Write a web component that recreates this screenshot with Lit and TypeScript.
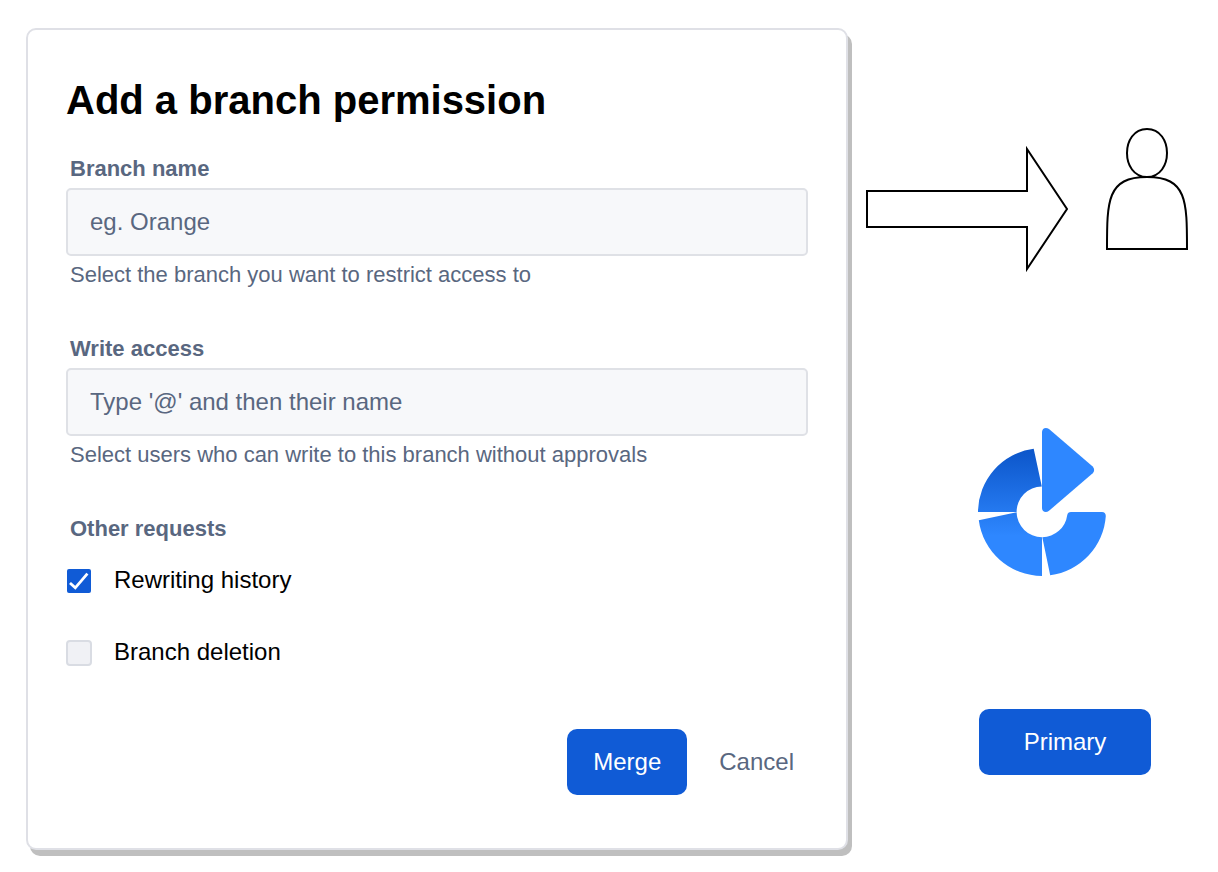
import { LitElement, html, css } from "lit";
import { customElement } from "lit/decorators.js";

@customElement("permission-form")
class PermissionForm extends LitElement {
  static styles = css`
    :host {
      display: block;
      box-sizing: border-box;
      padding: 46px 38px 53px;
      border: 2px solid #dfe0e6;
      border-radius: 10px;
      background: #fff;
      box-shadow: 4px 6px 0 #bfbfbf;
    }
    form {
      display: flex;
      flex-direction: column;
    }
    h1 {
      margin: 0 0 31px;
      font-size: 40px;
      line-height: 48px;
      font-weight: 700;
      color: #000;
    }
    .field {
      display: flex;
      flex-direction: column;
      margin-bottom: 46px;
    }
    .label {
      padding: 0 4px;
      font-size: 22px;
      line-height: 28px;
      font-weight: 700;
      color: #596780;
    }
    .text {
      box-sizing: border-box;
      width: 100%;
      height: 68px;
      margin: 5px 0;
      padding: 0 22px;
      border: 2px solid #dfe1e6;
      border-radius: 5px;
      background: #f7f8fa;
      color: #596780;
      font: inherit;
      font-size: 24px;
    }
    .text::placeholder {
      color: #596780;
      opacity: 1;
    }
    .hint {
      margin: 0;
      padding: 0 4px;
      font-size: 22px;
      line-height: 28px;
      color: #596780;
    }
    fieldset {
      display: flex;
      flex-direction: column;
      min-width: 0;
      margin: 0;
      padding: 0;
      border: 0;
    }
    legend {
      margin-bottom: 23px;
    }
    .option {
      display: flex;
      align-items: center;
      gap: 22px;
      margin-bottom: 44px;
      font-size: 24px;
      line-height: 28px;
      color: #000;
    }
    .box {
      appearance: none;
      display: grid;
      flex: none;
      box-sizing: border-box;
      width: 26px;
      height: 26px;
      margin: 0;
      border: 2px solid #d9dce3;
      border-radius: 4px;
      background: #f0f1f5;
    }
    .check {
      display: grid;
      padding-top: 2px;
    }
    .check > * {
      grid-area: 1 / 1;
    }
    .check svg {
      display: none;
      pointer-events: none;
    }
    .box:checked {
      border: 1px solid transparent;
      border-radius: 3px;
      background: #105bd6 padding-box;
    }
    .box:checked + svg {
      display: block;
    }
    .actions {
      display: flex;
      justify-content: flex-end;
      gap: 18px;
      margin-top: 19px;
    }
    button {
      height: 66px;
      padding: 0 14px;
      border: 0;
      border-radius: 10px;
      font: inherit;
      font-size: 24px;
      cursor: pointer;
    }
    .merge {
      min-width: 120px;
      background: #105bd6;
      color: #fff;
    }
    .cancel {
      min-width: 102px;
      background: none;
      color: #596780;
    }
  `;

  private field(id: string, label: string, placeholder: string, hint: string) {
    return html`
      <div class="field">
        <label class="label" for=${id}>${label}</label>
        <input class="text" id=${id} type="text" placeholder=${placeholder} aria-describedby="${id}-hint" />
        <p class="hint" id="${id}-hint">${hint}</p>
      </div>
    `;
  }

  private option(label: string, checked: boolean) {
    return html`
      <label class="option">
        <span class="check">
          <input class="box" type="checkbox" ?checked=${checked} />
          <svg width="26" height="26" viewBox="0 0 26 26" fill="none" stroke="#fff" stroke-width="2.8" aria-hidden="true">
            <path d="M4 15 L9.3 19.8 L21.4 5.6" />
          </svg>
        </span>
        <span>${label}</span>
      </label>
    `;
  }

  render() {
    return html`
      <form @submit=${(e: Event) => e.preventDefault()}>
        <h1>Add a branch permission</h1>
        ${this.field("branch", "Branch name", "eg. Orange", "Select the branch you want to restrict access to")}
        ${this.field("writers", "Write access", "Type '@' and then their name", "Select users who can write to this branch without approvals")}
        <fieldset>
          <legend class="label">Other requests</legend>
          ${this.option("Rewriting history", true)}
          ${this.option("Branch deletion", false)}
        </fieldset>
        <div class="actions">
          <button class="merge" type="submit">Merge</button>
          <button class="cancel" type="button">Cancel</button>
        </div>
      </form>
    `;
  }
}

@customElement("app-root")
class AppRoot extends LitElement {
  static styles = css`
    :host {
      display: flex;
      align-items: flex-start;
      gap: 18px;
      padding: 28px 30px 16px 26px;
      background: #fff;
      font-family: "Liberation Sans", Arial, Helvetica, sans-serif;
    }
    permission-form {
      flex: 1;
      min-width: 0;
    }
    svg {
      display: block;
      overflow: visible;
    }
    aside {
      flex: none;
      padding-top: 100px;
    }
    .flow {
      display: flex;
      align-items: center;
      gap: 38px;
    }
    .person {
      margin-bottom: 40px;
    }
    .brand {
      display: flex;
      flex-direction: column;
      align-items: flex-start;
      gap: 133px;
      width: 174px;
      margin: 138px 0 0 112px;
    }
    .primary {
      align-self: center;
      min-width: 172px;
      height: 66px;
      border: 0;
      border-radius: 10px;
      background: #105bd6;
      color: #fff;
      font: inherit;
      font-size: 24px;
      cursor: pointer;
    }
  `;

  render() {
    return html`
      <permission-form></permission-form>
      <aside>
        <div class="flow">
          <svg width="202" height="122" viewBox="0 0 202 122" fill="#fff" stroke="#000" stroke-width="2" stroke-miterlimit="10" aria-hidden="true">
            <path d="M1 43 H161 V1 L201 61 L161 121 V79 H1 Z" />
          </svg>
          <svg class="person" width="82" height="122" viewBox="0 0 82 122" fill="#fff" stroke="#000" stroke-width="2" aria-hidden="true">
            <path d="M1 121 C1 73 1 49 41 49 C14.33 49 14.33 1 41 1 C67.67 1 67.67 49 41 49 C81 49 81 73 81 121 Z" />
          </svg>
        </div>
        <div class="brand">
          <svg width="128" height="148" viewBox="0 0 128 148" role="img" aria-label="Bamboo">
            <defs>
              <linearGradient id="shade" gradientUnits="userSpaceOnUse" x1="0" y1="24" x2="0" y2="108">
                <stop offset="0" stop-color="#0d57cb" />
                <stop offset="1" stop-color="#2e87ff" />
              </linearGradient>
            </defs>
            <path fill="url(#shade)" d="M0 84 A64 64 0 0 1 55.7 20.8 L63.8 58.6 A25.4 25.4 0 0 0 38.6 84 Z" />
            <path fill="url(#shade)" d="M38.6 84.3 L0.8 92.2 A64 64 0 0 0 64 148 V109.2 A25.4 25.4 0 0 1 38.6 84.3 Z" />
            <path fill="#2e87ff" d="M64.3 109.2 L72.2 147.2 A64 64 0 0 0 127.8 88 Q127.6 84 124 84 H93 Q89.8 84 89.2 87.2 A25.4 25.4 0 0 1 64.3 109.2 Z" />
            <path fill="#2e87ff" d="M64 4 C64 0.3 67.8 -1.4 71 1 L114.7 38.6 Q117.6 42 114.7 45.2 L71 82.8 C67.8 85.4 64 83.7 64 80 Z" />
          </svg>
          <button class="primary" type="button">Primary</button>
        </div>
      </aside>
    `;
  }
}
